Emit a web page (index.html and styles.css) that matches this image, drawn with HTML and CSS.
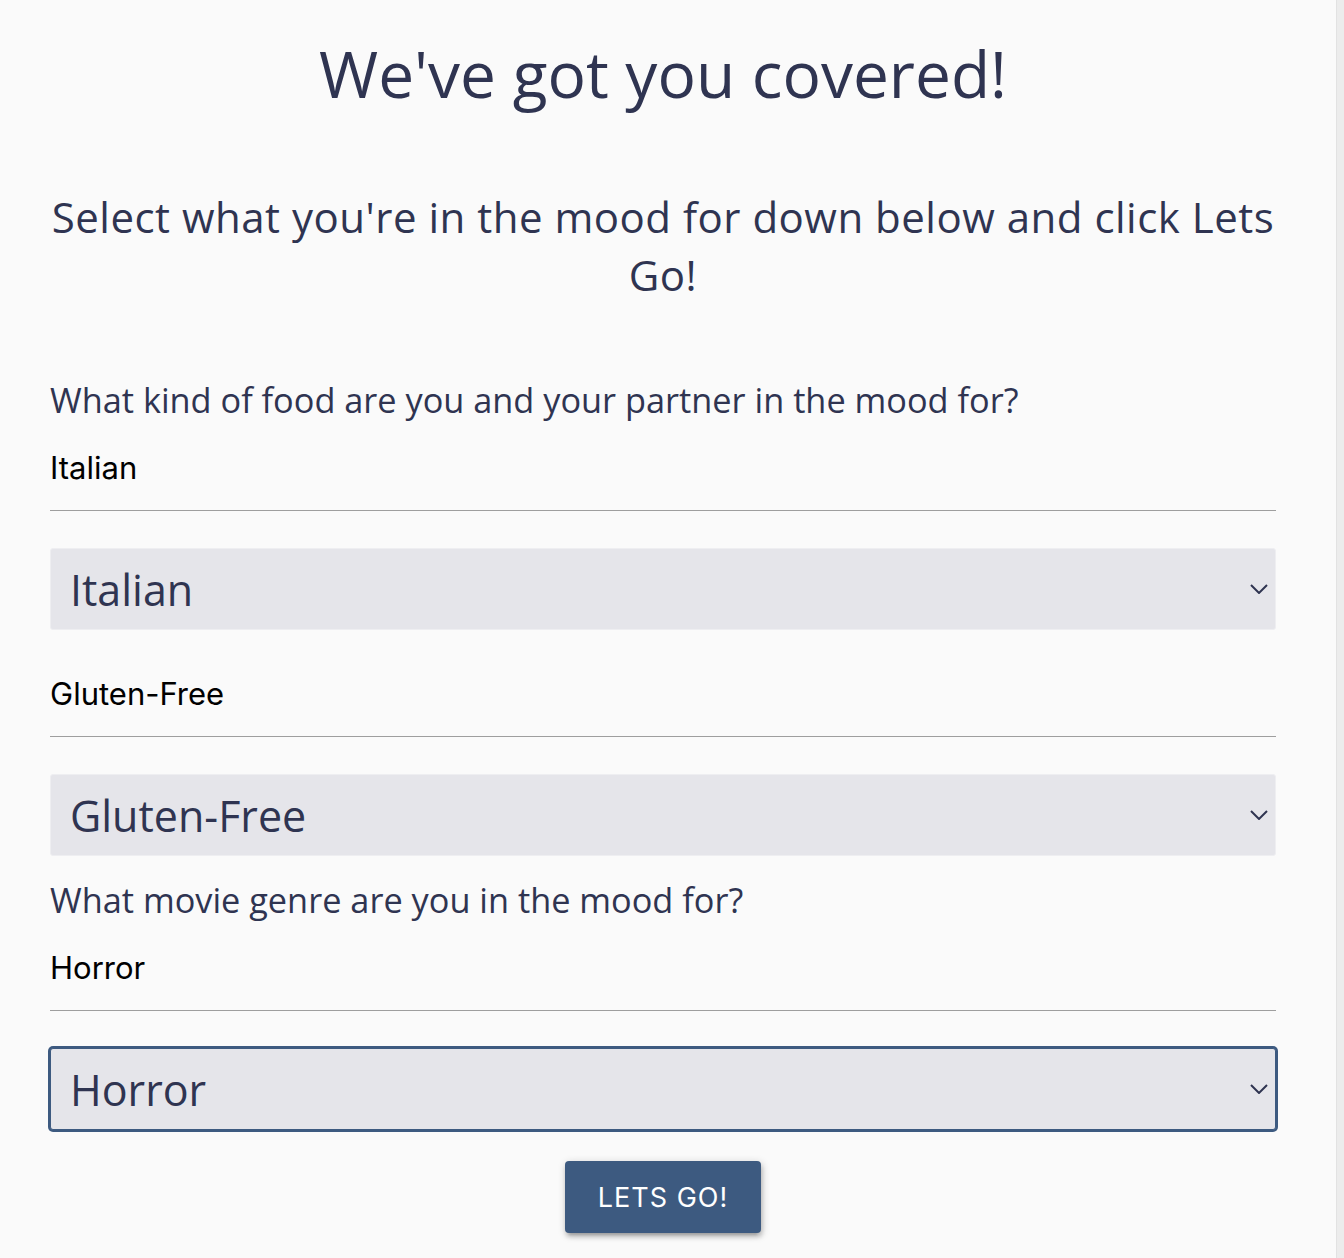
FILE: index.html
```html
<!DOCTYPE html>
<html lang="en">
<head>
<meta charset="utf-8">
<title>We've got you covered!</title>
<link rel="stylesheet" href="styles.css">
</head>
<body>
<div class="frame">
  <main class="page">
    <h1 class="title">We've got you covered!</h1>
    <p class="subtitle">Select what you're in the mood for down below and click Lets Go!</p>

    <form class="form">
      <label class="question">What kind of food are you and your partner in the mood for?</label>
      <div class="field field-first">Italian</div>
      <div class="select">
        <span class="select-value">Italian</span>
        <svg class="chevron" width="18" height="10" viewBox="0 0 18 10"><path d="M1 1l8 8 8-8" fill="none" stroke="#2f3451" stroke-width="2"/></svg>
      </div>

      <div class="field field-after-select">Gluten-Free</div>
      <div class="select">
        <span class="select-value">Gluten-Free</span>
        <svg class="chevron" width="18" height="10" viewBox="0 0 18 10"><path d="M1 1l8 8 8-8" fill="none" stroke="#2f3451" stroke-width="2"/></svg>
      </div>

      <label class="question question-second">What movie genre are you in the mood for?</label>
      <div class="field field-first">Horror</div>
      <div class="select select-focused">
        <span class="select-value">Horror</span>
        <svg class="chevron" width="18" height="10" viewBox="0 0 18 10"><path d="M1 1l8 8 8-8" fill="none" stroke="#2f3451" stroke-width="2"/></svg>
      </div>

      <div class="actions">
        <button type="button" class="btn">LETS GO!</button>
      </div>
    </form>
  </main>
  <div class="scrollbar"></div>
</div>
</body>
</html>
```
FILE: styles.css
```css
html, body {
  margin: 0;
  padding: 0;
  background: #fafafa;
}

.frame {
  display: flex;
  min-height: 100vh;
}

.page {
  flex: 1;
  padding: 0 60px 0 50px;
  color: #2f3451;
  font-family: "Open Sans", "DejaVu Sans", sans-serif;
}

.scrollbar {
  width: 7px;
  background: #ececec;
  border-left: 1px solid #e2e2e2;
}

.title {
  margin: 34px 0 0;
  font-size: 64px;
  font-weight: 400;
  line-height: 80px;
  text-align: center;
}

.subtitle {
  margin: 74px 0 0;
  font-size: 42px;
  letter-spacing: 0.5px;
  line-height: 58px;
  text-align: center;
}

.form {
  display: flex;
  flex-direction: column;
}

.question {
  display: block;
  margin-top: 76px;
  font-size: 34.3px;
  line-height: 40px;
}

.question-second {
  margin-top: 24px;
}

.field {
  font-family: Inter, "Liberation Sans", sans-serif;
  color: #000;
  font-size: 31px;
  line-height: 40px;
  padding-bottom: 22px;
  border-bottom: 1px solid #9e9e9e;
}

.field-first {
  padding-top: 28px;
}

.field-after-select {
  padding-top: 44px;
}

.select {
  margin-top: 37px;
  height: 80px;
  display: flex;
  align-items: center;
  justify-content: space-between;
  background: #e5e5ea;
  border: 1px solid #eeeef1;
  border-radius: 3px;
  padding: 0 7px 0 19px;
}

.select-focused {
  box-shadow: 0 0 0 2px #3d5a80;
  border-color: #3d5a80;
}

.select-value {
  font-size: 43px;
  line-height: 1;
  color: #2f3451;
}

.chevron {
  display: block;
}

.actions {
  display: flex;
  justify-content: center;
  margin-top: 31px;
}

.btn {
  height: 72px;
  padding: 0 33px;
  border: none;
  border-radius: 4px;
  background: #3d5a80;
  color: #fff;
  font-family: Inter, "Liberation Sans", sans-serif;
  font-size: 27px;
  letter-spacing: 1px;
  box-shadow: 1px 4px 4px 0 rgba(0,0,0,.16), 0 6px 2px -4px rgba(0,0,0,.12), 1px 2px 8px 0 rgba(0,0,0,.2);
}
```
